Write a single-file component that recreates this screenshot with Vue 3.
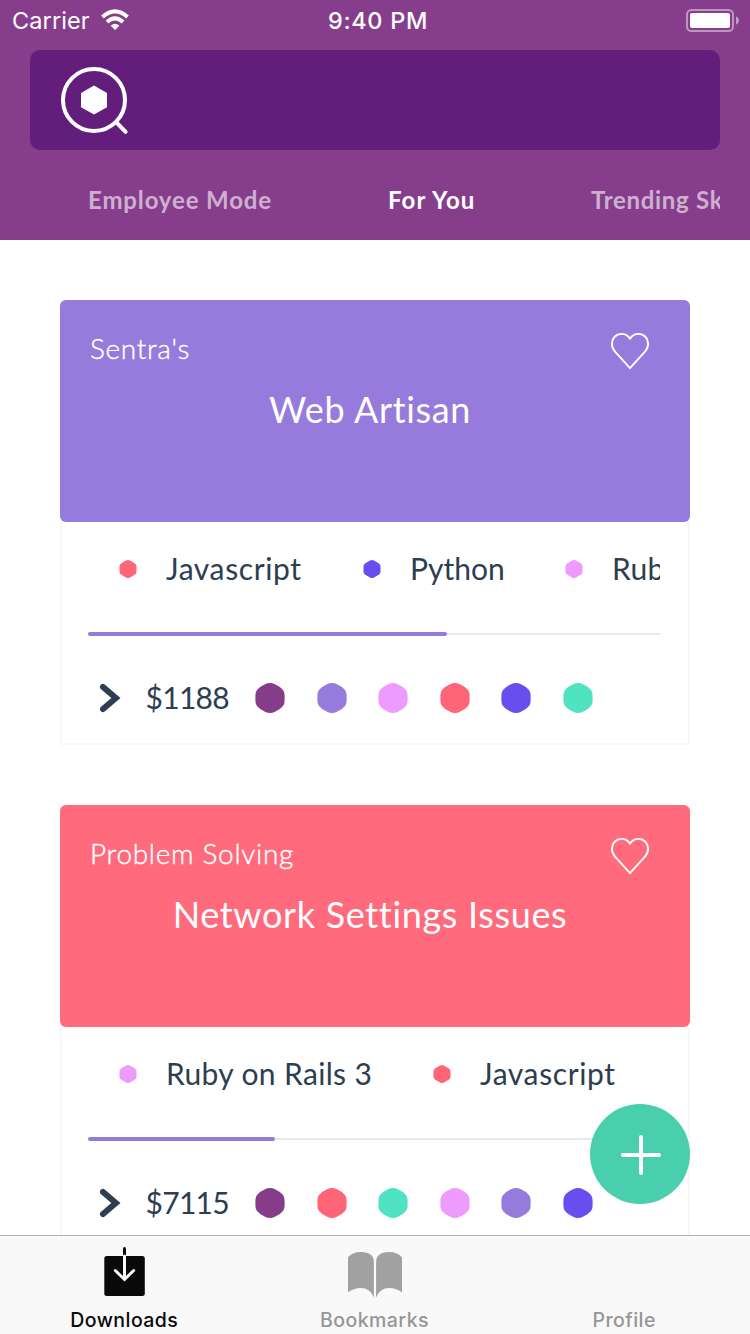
<script setup>
const tabs = [
  { label: 'Employee Mode', cls: 'employee' },
  { label: 'For You', cls: 'foryou active' },
  { label: 'Trending Skills', cls: 'trending' },
]

const cards = [
  {
    owner: "Sentra's",
    title: 'Web Artisan',
    cls: 'violet',
    progress: 358.5,
    price: '$1188',
    skills: [
      { label: 'Javascript', cls: 'javascript', color: '#ff6577' },
      { label: 'Python', cls: 'python', color: '#684eee' },
      { label: 'Ruby on Rails 3', cls: 'ruby', color: '#ee9bff' },
    ],
    dots: ['#853d8a', '#967adc', '#ee9bff', '#ff6577', '#684eee', '#50e3c2'],
  },
  {
    owner: 'Problem Solving',
    title: 'Network Settings Issues',
    cls: 'coral',
    progress: 187,
    price: '$7115',
    skills: [
      { label: 'Ruby on Rails 3', cls: 'ruby', color: '#ee9bff' },
      { label: 'Javascript', cls: 'javascript', color: '#ff6577' },
    ],
    dots: ['#853d8a', '#ff6577', '#50e3c2', '#ee9bff', '#967adc', '#684eee'],
  },
]

const hexagon =
  'M10 1.2Q15 -1.2 20 1.2Q25 3.4 27.8 6.8Q29.6 9 29.6 12V18Q29.6 21 27.8 23.2Q25 26.6 20 28.8Q15 31.2 10 28.8Q5 26.6 2.2 23.2Q.4 21 .4 18V12Q.4 9 2.2 6.8Q5 3.4 10 1.2Z'
const smallHexagon =
  'M11.8 1Q15 -.9 18.2 1L26.2 5.3Q29.2 7.3 29.2 10.6V19.4Q29.2 22.7 26.2 24.7L18.2 29Q15 30.9 11.8 29L3.8 24.7Q.8 22.7 .8 19.4V10.6Q.8 7.3 3.8 5.3Z'
</script>

<template>
  <div class="screen">
    <header class="header">
      <div class="status">
        <div class="carrier">
          <span>Carrier</span>
          <svg width="28" height="22" viewBox="0 0 28 22">
            <path d="M14 21l-4.3-4.3q4.3-3.8 8.6 0z" fill="#fff" />
            <path d="M6 13Q14 5.6 22 13" fill="none" stroke="#fff" stroke-width="4" />
            <path d="M1.5 7.9Q14 -3.3 26.5 7.9" fill="none" stroke="#fff" stroke-width="4" />
          </svg>
        </div>
        <span class="clock">9:40 PM</span>
        <svg class="battery" width="54" height="24" viewBox="0 0 54 24">
          <rect x="1" y="1" width="46" height="21" rx="4.5" fill="none" stroke="#fff" stroke-opacity=".45" stroke-width="2" />
          <rect x="4" y="4" width="40" height="15" rx="2" fill="#fff" />
          <path d="M50 7.3q3 1.5 3 4.2t-3 4.2z" fill="#fff" fill-opacity=".5" />
        </svg>
      </div>
      <div class="search">
        <svg width="70" height="70" viewBox="0 0 70 70">
          <circle cx="34" cy="35" r="31" fill="none" stroke="#fff" stroke-width="4" />
          <path d="M56.5 57.5L65.6 66.8" stroke="#fff" stroke-width="4" stroke-linecap="round" />
          <path d="M34 20.5L47 28V42.2L34 49.5L21 42.2V28Z" fill="#fff" />
        </svg>
      </div>
      <nav class="tabs">
        <span v-for="t in tabs" :key="t.label" class="tab" :class="t.cls">{{ t.label }}</span>
      </nav>
    </header>

    <main class="feed">
      <article v-for="c in cards" :key="c.title" class="card">
        <div class="head" :class="c.cls">
          <div class="top">
            <span class="owner">{{ c.owner }}</span>
            <svg class="heart" width="40" height="40" viewBox="0 0 40 40">
              <path
                d="M20 7.6C17.6 4.2 14.4 2.9 11.6 2.9C6 2.9 1.9 7.2 1.9 12.6C1.9 15.8 2.8 18.2 4.8 20.4L20 37.2L35.2 20.4C37.2 18.2 38.1 15.8 38.1 12.6C38.1 7.2 34 2.9 28.4 2.9C25.6 2.9 22.4 4.2 20 7.6Z"
                fill="none" stroke="#fff" stroke-width="1.9" />
            </svg>
          </div>
          <h2>{{ c.title }}</h2>
        </div>
        <div class="body">
          <div class="skills">
            <div v-for="s in c.skills" :key="s.label" class="skill">
              <svg width="18" height="18" viewBox="0 0 30 30"><path :d="smallHexagon" :fill="s.color" /></svg>
              <span :class="s.cls">{{ s.label }}</span>
            </div>
          </div>
          <div class="track"><div class="fill" :style="{ width: c.progress + 'px' }"></div></div>
          <div class="foot">
            <svg class="chevron" width="24" height="30" viewBox="0 0 24 30">
              <path d="M5 4L17.9 15L5 26" fill="none" stroke="#2c3e50" stroke-width="6" stroke-linecap="round" />
            </svg>
            <span class="price">{{ c.price }}</span>
            <div class="dots">
              <svg v-for="d in c.dots" :key="d" width="30" height="30" viewBox="0 0 30 30"><path :d="hexagon" :fill="d" /></svg>
            </div>
          </div>
        </div>
      </article>
    </main>

    <button class="fab" aria-label="Add">
      <svg width="44" height="44" viewBox="0 0 44 44">
        <path d="M22 4V40M4 22H40" stroke="#fff" stroke-width="4" stroke-linecap="round" />
      </svg>
    </button>

    <footer class="tabbar">
      <div class="item current">
        <svg width="60" height="56" viewBox="0 0 60 56">
          <rect x="9.3" y="16" width="40.5" height="40" rx="2.5" fill="#0a0a0a" />
          <path d="M29.5 8.5V16" stroke="#0a0a0a" stroke-width="3" stroke-linecap="round" />
          <path d="M29.5 16V39M20.300 30.5L29.5 39.5L38.7 30.5" fill="none" stroke="#f9f9f9" stroke-width="3" stroke-linecap="round" />
        </svg>
        <span>Downloads</span>
      </div>
      <div class="item marks">
        <svg width="56" height="56" viewBox="0 0 56 56">
          <path d="M1 17.5Q5 12 14 12Q26.9 12.3 26.9 22V57.5Q23.5 48 13.5 48Q6.5 48 1 52.5Z" fill="#a1a1a1" />
          <path d="M55 17.5Q51 12 42 12Q29.1 12.3 29.1 22V57.5Q32.5 48 42.5 48Q49.5 48 55 52.5Z" fill="#a1a1a1" />
        </svg>
        <span>Bookmarks</span>
      </div>
      <div class="item profile"><span>Profile</span></div>
    </footer>
  </div>
</template>

<style>
body {
  background: #fff;
}
</style>

<style scoped>
.screen {
  position: relative;
  display: flex;
  flex-direction: column;
  width: 750px;
  height: 1334px;
  overflow: hidden;
  background: #fff;
  color: #2c3e50;
  font-family: Lato, "Liberation Sans", sans-serif;
}
svg {
  display: block;
  flex: none;
  overflow: visible;
}
.header {
  flex: none;
  height: 240px;
  background: #863e8c;
}
.status {
  display: grid;
  grid-template-columns: 1fr auto 1fr;
  align-items: center;
  height: 50px;
  padding: 1px 10px 9px 12px;
  box-sizing: border-box;
  color: #fff;
  font: 400 23.5px/40px Inter, sans-serif;
}
.carrier {
  display: flex;
  align-items: center;
  gap: 11px;
  letter-spacing: 0.1px;
}
.carrier svg {
  margin-bottom: 2px;
}
.clock {
  font-weight: 500;
  letter-spacing: 0.7px;
  margin-left: 4px;
}
.battery {
  justify-self: end;
}
.search {
  display: flex;
  align-items: center;
  height: 100px;
  margin: 0 30px;
  padding-left: 30px;
  box-sizing: border-box;
  border-radius: 10px;
  background: #631d7a;
}
.tabs {
  display: flex;
  height: 90px;
  margin: 0 30px;
  padding-left: 58px;
  overflow: hidden;
  white-space: nowrap;
  color: rgba(255, 255, 255, 0.6);
  font-size: 24px;
  font-weight: 700;
  line-height: 100px;
  letter-spacing: 0.85px;
}
.tab {
  flex: none;
}
.employee {
  width: 300px;
}
.foryou {
  width: 203px;
  letter-spacing: 1.1px;
}
.trending {
  letter-spacing: 0.7px;
}
.active {
  color: #fff;
}
.feed {
  flex: 1;
  min-height: 0;
  padding: 60px 60px 0;
  overflow: hidden;
}
.card {
  height: 445px;
  margin-bottom: 60px;
}
.head {
  height: 222px;
  padding: 30px 40px 0 30px;
  box-sizing: border-box;
  border-radius: 6px;
  color: #fff;
}
.violet {
  background: #967adc;
}
.coral {
  background: #ff6a7c;
}
.top {
  display: flex;
  justify-content: space-between;
  height: 40px;
}
.heart {
  margin-top: 1px;
}
.owner {
  font-size: 28px;
  font-weight: 300;
  line-height: 36px;
  letter-spacing: 0.7px;
  -webkit-text-stroke: 0.4px #fff;
}
h2 {
  margin: 14px 0 0;
  font-size: 36px;
  font-weight: 400;
  line-height: 50px;
  letter-spacing: 0.66px;
  text-align: center;
}
.body {
  height: 223px;
  padding: 0 28px 0 26px;
  box-sizing: border-box;
  border: 2px solid #f6f6fb;
  border-top: 0;
}
.skills {
  display: flex;
  gap: 61px;
  height: 94px;
  margin-bottom: 16px;
  padding-left: 31px;
  overflow: hidden;
  white-space: nowrap;
  font-size: 30px;
  line-height: 92px;
}
.skill {
  display: flex;
  flex: none;
  align-items: center;
  gap: 29px;
  height: 94px;
}
.skill span {
  height: 94px;
}
.javascript {
  width: 136px;
  letter-spacing: 0.6px;
}
.python {
  width: 94px;
}
.ruby {
  width: 206px;
  letter-spacing: 0.35px;
}
.track {
  display: flex;
  align-items: center;
  height: 4px;
  background: linear-gradient(#e6eaee, #e6eaee) center / 100% 2px no-repeat;
}
.fill {
  height: 4px;
  border-radius: 2px;
  background: #967adc;
}
.foot {
  display: flex;
  align-items: center;
  height: 124px;
  padding-left: 10px;
}
.price {
  width: 109.4px;
  margin-left: 23.6px;
  padding-bottom: 2px;
  font-size: 30px;
  line-height: 40px;
  letter-spacing: -0.75px;
}
.dots {
  display: flex;
  gap: 31.6px;
}
.fab {
  position: absolute;
  right: 60px;
  bottom: 130px;
  display: flex;
  align-items: center;
  justify-content: center;
  width: 100px;
  height: 100px;
  padding: 2px 0 0 2px;
  border: 0;
  border-radius: 50%;
  background: #49cfae;
}
.tabbar {
  display: flex;
  flex: none;
  justify-content: space-between;
  height: 99px;
  padding: 0 1px 0 0;
  box-sizing: border-box;
  border-top: 1px solid #b0b0b2;
  background: #f9f9f9;
  color: #969696;
  font: 500 19.5px/28px Inter, sans-serif;
  letter-spacing: 0.45px;
}
.item {
  display: flex;
  flex: 1;
  flex-direction: column;
  align-items: center;
  justify-content: flex-end;
  height: 98px;
}
.item svg {
  margin: 0 0 10px;
}
.current {
  color: #0a0a0a;
}
.current span {
  margin-right: 1px;
}
</style>
